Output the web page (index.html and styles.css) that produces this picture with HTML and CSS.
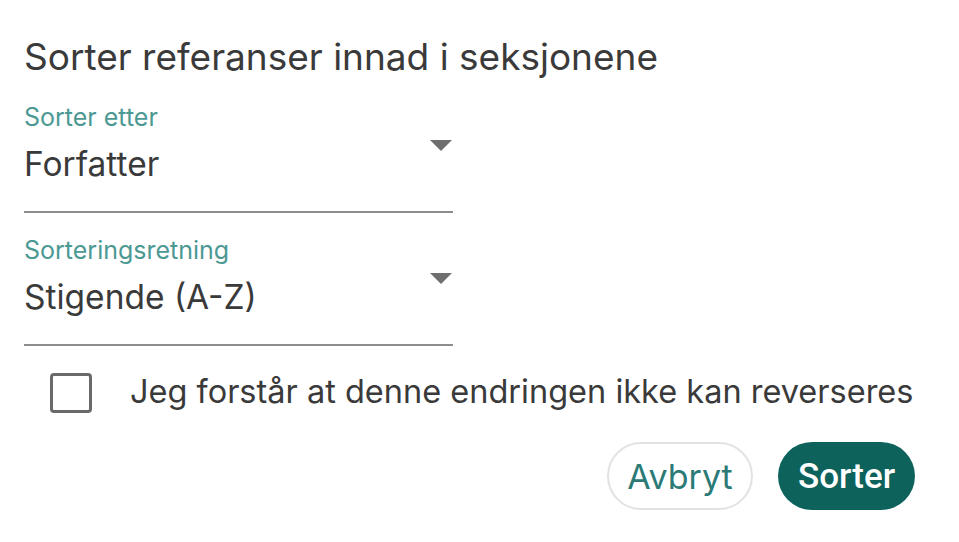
FILE: index.html
```html
<!DOCTYPE html>
<html lang="no">
<head>
<meta charset="utf-8">
<link rel="stylesheet" href="styles.css">
</head>
<body>
<div class="dialog">
  <h1 class="title">Sorter referanser innad i seksjonene</h1>
  <div class="field field-first">
    <div class="label">Sorter etter</div>
    <div class="control">
      <span class="value">Forfatter</span>
      <svg class="arrow" width="24" height="12" viewBox="0 0 24 12"><path d="M1 0 L23 0 L12 11 Z" fill="#6f6f6f"/></svg>
    </div>
  </div>
  <div class="field">
    <div class="label">Sorteringsretning</div>
    <div class="control">
      <span class="value">Stigende (A-Z)</span>
      <svg class="arrow" width="24" height="12" viewBox="0 0 24 12"><path d="M1 0 L23 0 L12 11 Z" fill="#6f6f6f"/></svg>
    </div>
  </div>
  <label class="check">
    <span class="box"></span>
    <span class="check-text">Jeg forstår at denne endringen ikke kan reverseres</span>
  </label>
  <div class="actions">
    <button class="btn btn-outline">Avbryt</button>
    <button class="btn btn-primary">Sorter</button>
  </div>
</div>
</body>
</html>
```

FILE: styles.css
```css
html, body {
  margin: 0;
  padding: 0;
  background: #ffffff;
}
.dialog {
  width: 959px;
  height: 542px;
  box-sizing: border-box;
  padding: 34px 44px 0 24px;
  display: flex;
  flex-direction: column;
  font-family: Inter, "Open Sans", sans-serif;
  color: #3c3c3c;
}
.title {
  margin: 0;
  font-size: 37px;
  line-height: 46px;
  font-weight: 400;
  color: #3a3a3a;
  white-space: nowrap;
}
.field {
  width: 429px;
  border-bottom: 2px solid #8d8d8d;
  display: flex;
  flex-direction: column;
  margin-top: 22px;
}
.label {
  font-size: 25px;
  line-height: 30px;
  color: #4c9994;
}
.control {
  display: flex;
  align-items: flex-start;
  justify-content: space-between;
  height: 79px;
}
.value {
  font-size: 33.5px;
  line-height: 40px;
  margin-top: 12px;
  color: #3a3a3a;
}
.arrow {
  margin-top: 8px;
}
.check {
  display: flex;
  align-items: center;
  margin-top: 27px;
  margin-left: 26px;
}
.box {
  width: 36px;
  height: 34px;
  border: 3px solid #6a6a6a;
  border-radius: 4px;
  flex: none;
}
.check-text {
  margin-left: 38px;
  margin-top: -3px;
  font-size: 32.5px;
  line-height: 40px;
  color: #3a3a3a;
  white-space: nowrap;
}
.actions {
  display: flex;
  justify-content: flex-end;
  gap: 25px;
  margin-top: 29px;
}
.btn {
  height: 68px;
  border-radius: 34px;
  padding: 0;
  box-sizing: border-box;
}
.btn-outline {
  width: 146px;
  background: #ffffff;
  border: 2px solid #e2e2e2;
  color: #2b7a75;
  font-family: Inter, sans-serif;
  font-size: 34px;
}
.btn-primary {
  width: 137px;
  background: #0e625c;
  border: none;
  color: #ffffff;
  font-family: Roboto, sans-serif;
  font-weight: 500;
  font-size: 35px;
}
```
